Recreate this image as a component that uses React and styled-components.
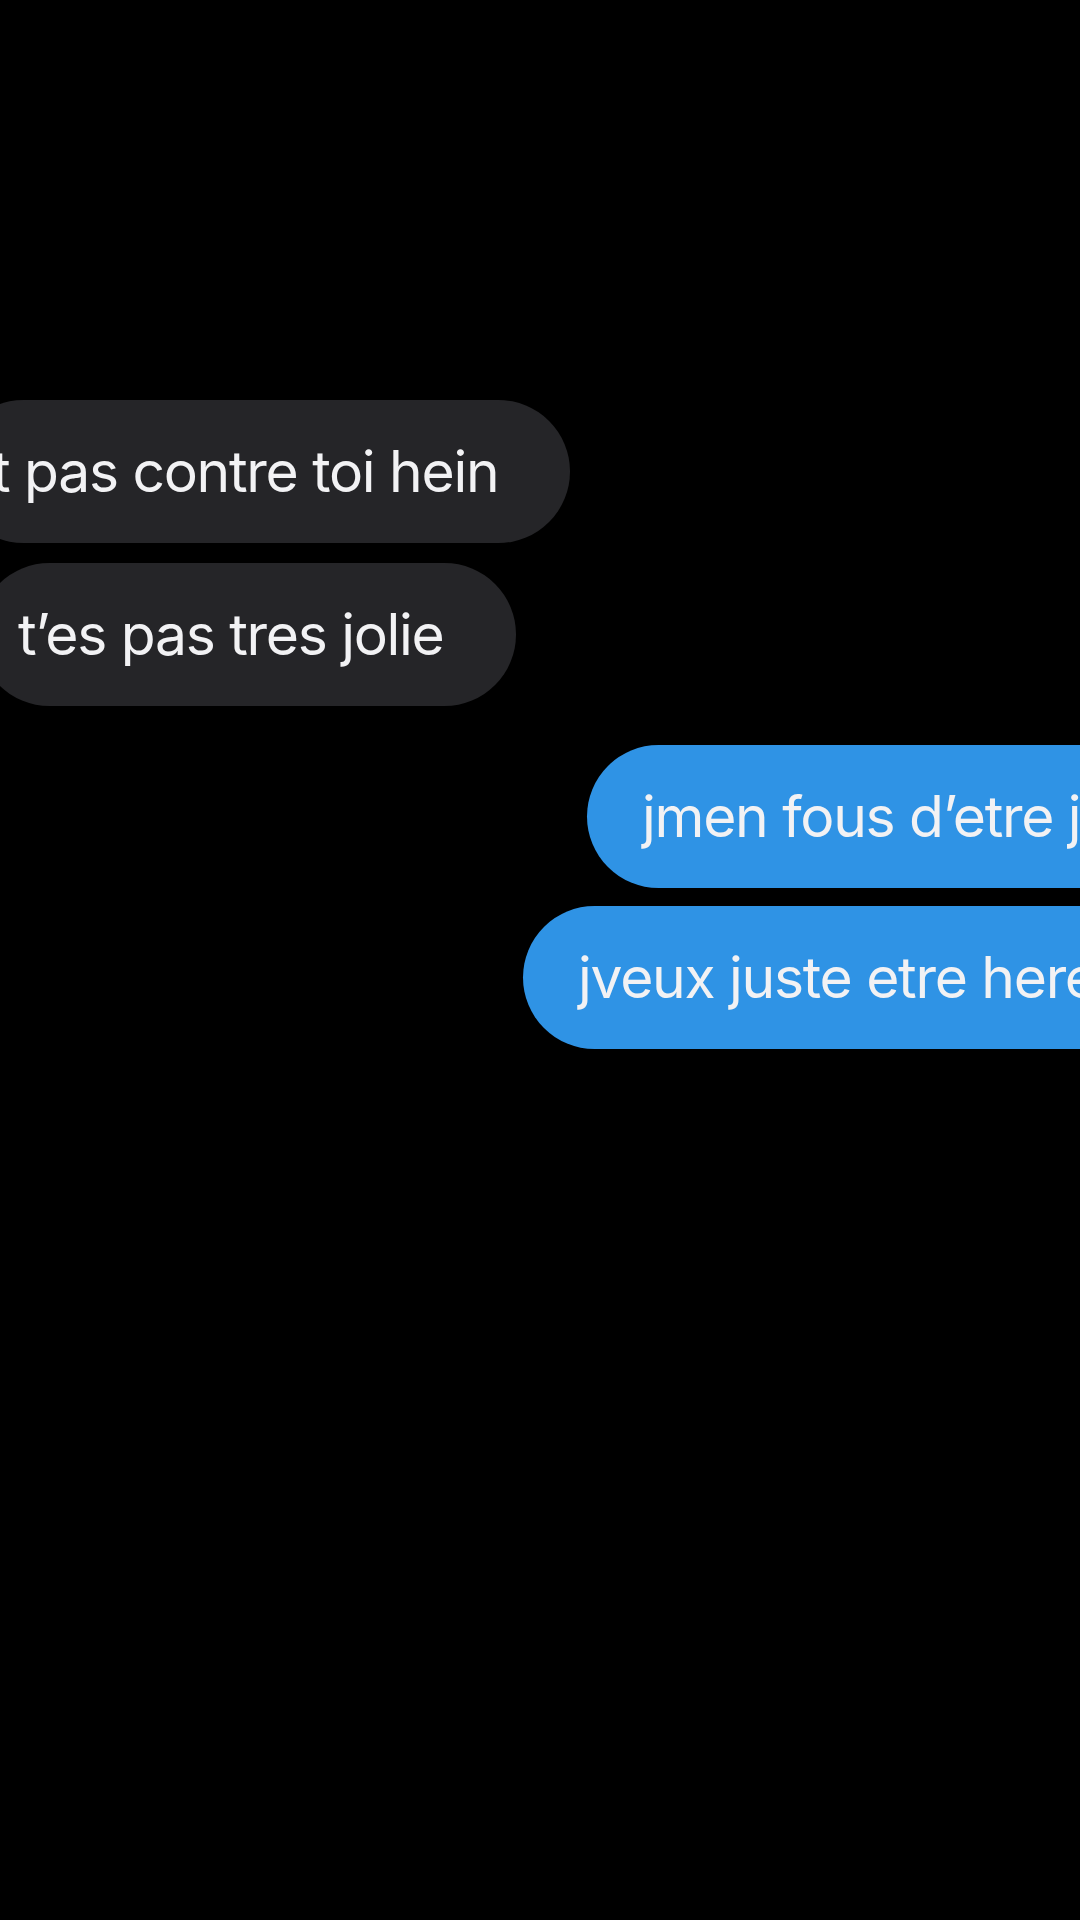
import React from "react";
import styled, { createGlobalStyle } from "styled-components";

const GlobalStyle = createGlobalStyle`
  html, body {
    margin: 0;
    padding: 0;
    background: #000;
  }
`;

const Screen = styled.div`
  width: 1080px;
  min-height: 1920px;
  background: #000;
  overflow: hidden;
  padding-top: 400px;
  box-sizing: border-box;
  font-family: "Inter", "Noto Sans", sans-serif;
`;

const Group = styled.div`
  display: flex;
  flex-direction: column;
  gap: ${(p) => p.$gap}px;
  margin-bottom: ${(p) => p.$after || 0}px;
`;

const Row = styled.div`
  display: flex;
  justify-content: flex-start;
  overflow: hidden;
`;

const Bubble = styled.div`
  flex: none;
  height: 143px;
  display: flex;
  align-items: center;
  box-sizing: border-box;
  border-radius: 72px;
  white-space: nowrap;
  font-size: 57px;
  letter-spacing: -1.3px;
  color: #f2f2f4;
  background: ${(p) => (p.$mine ? "#2f93e5" : "#252528")};
  margin-left: ${(p) => p.$offset}px;
  padding: ${(p) => (p.$mine ? "0 80px 0 55px" : "0 72px 0 40px")};
`;

const messages = [
  { id: 1, mine: false, offset: -48, text: "t pas contre toi hein" },
  { id: 2, mine: false, offset: -22, text: "t’es pas tres jolie" },
];

const replies = [
  { id: 3, mine: true, offset: 587, text: "jmen fous d’etre j" },
  { id: 4, mine: true, offset: 523, text: "jveux juste etre here" },
];

export default function App() {
  return (
    <Screen>
      <GlobalStyle />
      <Group $gap={20} $after={39}>
        {messages.map((m) => (
          <Row key={m.id}>
            <Bubble $offset={m.offset}>{m.text}</Bubble>
          </Row>
        ))}
      </Group>
      <Group $gap={18}>
        {replies.map((m) => (
          <Row key={m.id}>
            <Bubble $mine $offset={m.offset}>
              {m.text}
            </Bubble>
          </Row>
        ))}
      </Group>
    </Screen>
  );
}
